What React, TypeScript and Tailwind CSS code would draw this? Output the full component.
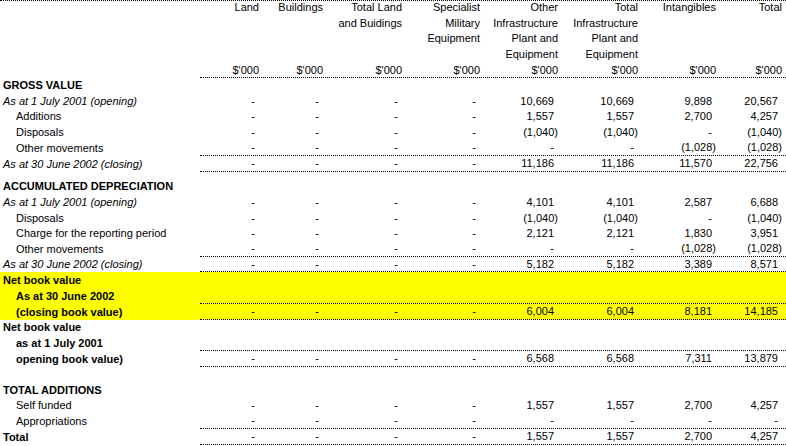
import React from "react";

type Kind = "head" | "italic" | "indent" | "boldIndent" | "blank";
type Row = {
  label?: string;
  kind: Kind;
  h: string;
  vals?: string[];
  border?: boolean;
  yellow?: boolean;
};

const D = "-";

const rows: Row[] = [
  { label: "GROSS VALUE", kind: "head", h: "h-[15px]" },
  { label: "As at 1 July 2001 (opening)", kind: "italic", h: "h-[16px]", vals: [D, D, D, D, "10,669", "10,669", "9,898", "20,567"] },
  { label: "Additions", kind: "indent", h: "h-[15px]", vals: [D, D, D, D, "1,557", "1,557", "2,700", "4,257"] },
  { label: "Disposals", kind: "indent", h: "h-[16px]", vals: [D, D, D, D, "(1,040)", "(1,040)", D, "(1,040)"] },
  { label: "Other movements", kind: "indent", h: "h-[16px]", border: true, vals: [D, D, D, D, D, D, "(1,028)", "(1,028)"] },
  { label: "As at 30 June 2002 (closing)", kind: "italic", h: "h-[16px]", border: true, vals: [D, D, D, D, "11,186", "11,186", "11,570", "22,756"] },
  { kind: "blank", h: "h-[6px]" },
  { label: "ACCUMULATED DEPRECIATION", kind: "head", h: "h-[16px]" },
  { label: "As at 1 July 2001 (opening)", kind: "italic", h: "h-[16px]", vals: [D, D, D, D, "4,101", "4,101", "2,587", "6,688"] },
  { label: "Disposals", kind: "indent", h: "h-[16px]", vals: [D, D, D, D, "(1,040)", "(1,040)", D, "(1,040)"] },
  { label: "Charge for the reporting period", kind: "indent", h: "h-[15px]", vals: [D, D, D, D, "2,121", "2,121", "1,830", "3,951"] },
  { label: "Other movements", kind: "indent", h: "h-[16px]", border: true, vals: [D, D, D, D, D, D, "(1,028)", "(1,028)"] },
  { label: "As at 30 June 2002 (closing)", kind: "italic", h: "h-[15px]", border: true, vals: [D, D, D, D, "5,182", "5,182", "3,389", "8,571"] },
  { label: "Net book value", kind: "head", h: "h-[16px]", yellow: true },
  { label: "As at 30 June 2002", kind: "boldIndent", h: "h-[16px]", yellow: true, border: true },
  { label: "(closing book value)", kind: "boldIndent", h: "h-[16px]", yellow: true, border: true, vals: [D, D, D, D, "6,004", "6,004", "8,181", "14,185"] },
  { label: "Net book value", kind: "head", h: "h-[15px]" },
  { label: "as at 1 July 2001", kind: "boldIndent", h: "h-[16px]", border: true },
  { label: "opening book value)", kind: "boldIndent", h: "h-[16px]", border: true, vals: [D, D, D, D, "6,568", "6,568", "7,311", "13,879"] },
  { kind: "blank", h: "h-[15px]" },
  { label: "TOTAL ADDITIONS", kind: "head", h: "h-[16px]" },
  { label: "Self funded", kind: "indent", h: "h-[15px]", vals: [D, D, D, D, "1,557", "1,557", "2,700", "4,257"] },
  { label: "Appropriations", kind: "indent", h: "h-[16px]", border: true, vals: [D, D, D, D, D, D, D, D] },
  { label: "Total", kind: "head", h: "h-[16px]", border: true, vals: [D, D, D, D, "1,557", "1,557", "2,700", "4,257"] },
];

const GRID = "grid grid-cols-[60px_64px_79px_78px_78px_80px_78px_69px]";

const headers: string[][] = [
  ["Land"],
  ["Buildings"],
  ["Total Land", "and Buidings"],
  ["Specialist", "Military", "Equipment"],
  ["Other", "Infrastructure", "Plant and", "Equipment"],
  ["Total", "Infrastructure", "Plant and", "Equipment"],
  ["Intangibles"],
  ["Total"],
];

function labelClass(kind: Kind) {
  switch (kind) {
    case "head":
      return "pl-[3px] font-bold";
    case "italic":
      return "pl-[3px] italic";
    case "indent":
      return "pl-[16px]";
    case "boldIndent":
      return "pl-[16px] font-bold";
    default:
      return "";
  }
}

function NumCell({ v, last }: { v: string; last: boolean }) {
  const paren = v.startsWith("(");
  const pr = last
    ? paren
      ? "pr-[4px]"
      : "pr-[8px]"
    : paren
    ? "pr-[1px]"
    : "pr-[5px]";
  return (
    <div className={`flex items-center justify-end whitespace-nowrap ${pr}`}>{v}</div>
  );
}

export default function App() {
  return (
    <div className="w-[786px] h-[446px] overflow-hidden bg-white text-black text-[11px] leading-[13px] font-['Liberation_Sans',Arial,sans-serif]">
      <div className="border-t border-dotted border-black">
        {/* header titles */}
        <div className="flex h-[62px]">
          <div className="w-[200px]" />
          <div className={`${GRID} flex-1`}>
            {headers.map((lines, i) => (
              <div
                key={i}
                className={`flex flex-col items-end -mt-px leading-[15.5px] whitespace-nowrap ${
                  i === 7 ? "pr-[4px]" : "pr-[1px]"
                }`}
              >
                {lines.map((l, j) => (
                  <span key={j}>{l}</span>
                ))}
              </div>
            ))}
          </div>
        </div>
        {/* units row */}
        <div className="flex h-[15px]">
          <div className="w-[200px]" />
          <div className={`${GRID} flex-1 border-b border-dotted border-black`}>
            {headers.map((_, i) => (
              <div
                key={i}
                className={`flex items-center justify-end ${i === 7 ? "pr-[4px]" : "pr-[1px]"}`}
              >
                $'000
              </div>
            ))}
          </div>
        </div>
        {rows.map((r, idx) => (
          <div key={idx} className={`flex ${r.h} ${r.yellow ? "bg-[#ffff00]" : ""}`}>
            <div className={`w-[200px] flex items-center whitespace-nowrap ${labelClass(r.kind)}`}>
              {r.label}
            </div>
            <div className={`${GRID} flex-1 ${r.border ? "border-b border-dotted border-black" : ""}`}>
              {r.vals
                ? r.vals.map((v, i) => <NumCell key={i} v={v} last={i === 7} />)
                : null}
            </div>
          </div>
        ))}
      </div>
    </div>
  );
}
